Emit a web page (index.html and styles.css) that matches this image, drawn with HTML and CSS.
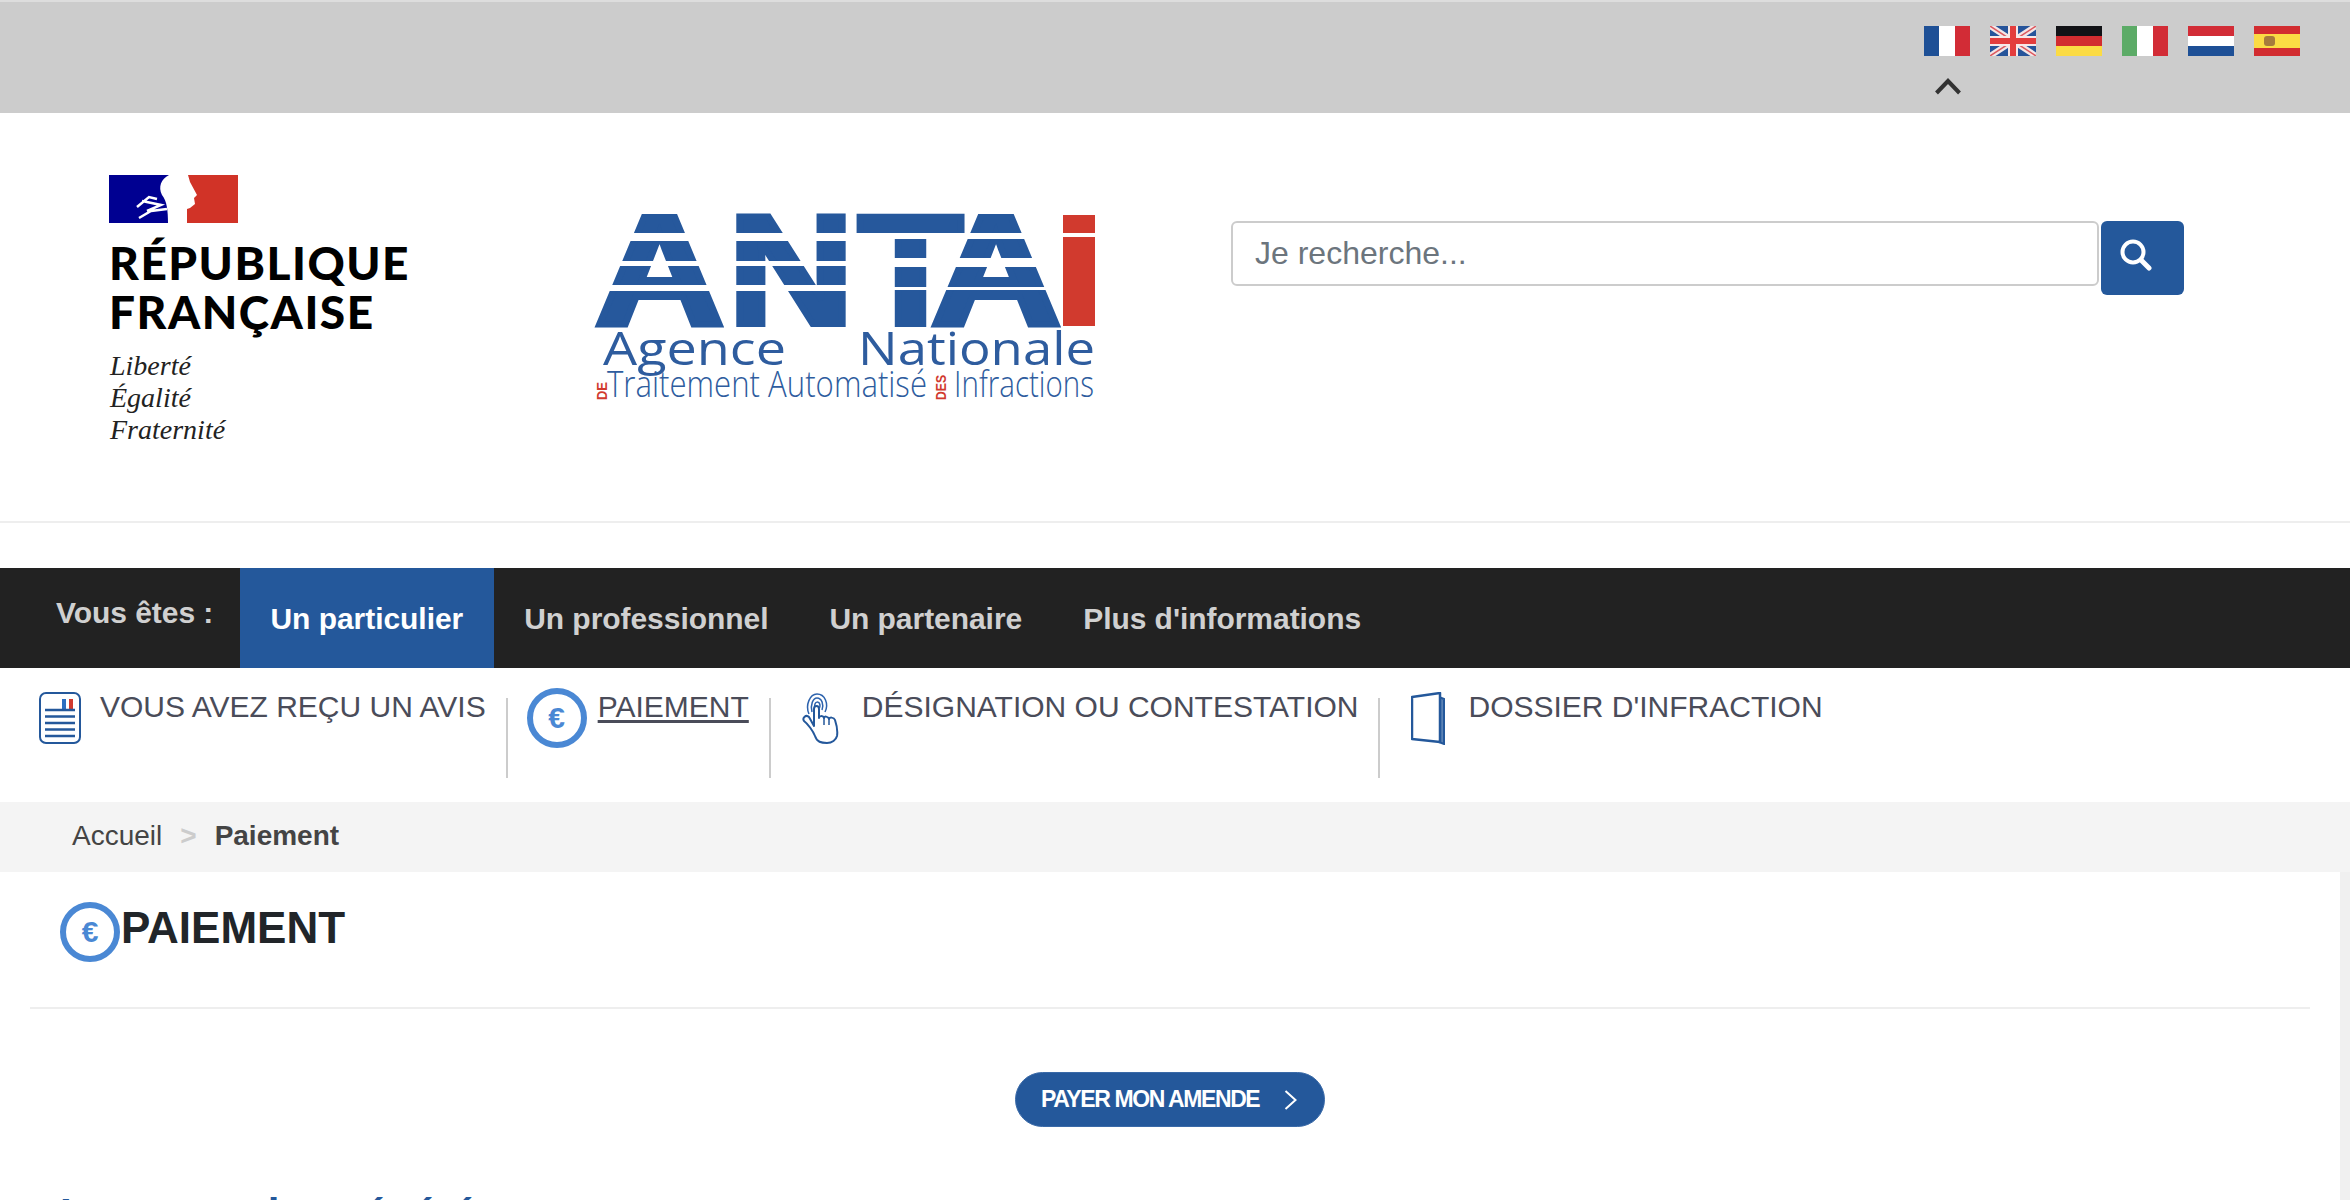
FILE: index.html
```html
<!DOCTYPE html>
<html lang="fr">
<head>
  <meta charset="UTF-8">
  <meta name="viewport" content="width=device-width, initial-scale=1.0">
  <title>ANTAI - Paiement</title>
  <link rel="stylesheet" href="styles.css">
</head>
<body>
  <!-- Langues -->
  <div class="topbar">
    <div class="lang">
      <div class="flags">
        <svg class="flag" viewBox="0 0 46 30"><rect width="46" height="30" fill="#fff"/><rect width="15" height="30" fill="#1e5096"/><rect x="31" width="15" height="30" fill="#d22c36"/></svg>
        <svg class="flag" viewBox="0 0 46 30"><rect width="46" height="30" fill="#26549a"/><path d="M0 0L46 30M46 0L0 30" stroke="#f3e6e6" stroke-width="6"/><path d="M0 0L46 30M46 0L0 30" stroke="#dc5a60" stroke-width="1.5"/><path d="M23 0V30M0 15H46" stroke="#f6e8e8" stroke-width="10"/><path d="M23 0V30M0 15H46" stroke="#e33d3d" stroke-width="6"/></svg>
        <svg class="flag" viewBox="0 0 46 30"><rect width="46" height="10" fill="#111216"/><rect y="10" width="46" height="10" fill="#d22c30"/><rect y="20" width="46" height="10" fill="#fbdb44"/></svg>
        <svg class="flag" viewBox="0 0 46 30"><rect width="46" height="30" fill="#fff"/><rect width="15" height="30" fill="#5cab67"/><rect x="31" width="15" height="30" fill="#d22c36"/></svg>
        <svg class="flag" viewBox="0 0 46 30"><rect width="46" height="10" fill="#d22c36"/><rect y="10" width="46" height="10" fill="#fff"/><rect y="20" width="46" height="10" fill="#1e5096"/></svg>
        <svg class="flag" viewBox="0 0 46 30"><rect width="46" height="30" fill="#d22c30"/><rect y="8" width="46" height="14" fill="#fbdb44"/><rect x="10" y="10" width="11" height="10" rx="3" fill="#a67b3c"/></svg>
      </div>
      <svg class="lang-toggle" viewBox="0 0 26 18"><path d="M1.5 16L13 4L24.500 16" fill="none" stroke="#333" stroke-width="4"/></svg>
    </div>
  </div>

  <header class="header">
    <div class="brand">
      <svg class="marianne" viewBox="0 0 129 48">
        <rect width="62" height="48" fill="#000091"/>
        <rect x="78" width="51" height="48" fill="#d13327"/>
        <path d="M60 0H79L81 7L88 20L85 23L86 29L81 33L72 36L71 42L73 48H59C59 36 58 26 53 20C49 12 52 4 60 0Z" fill="#fff"/>
        <path d="M28 32L40 22L48 24M33 26L52 30L38 36M30 43L42 36L58 34" fill="none" stroke="#fff" stroke-width="2.500"/>
      </svg>
      <div class="brand-name">RÉPUBLIQUE<br>FRANÇAISE</div>
      <div class="brand-motto">Liberté<br>Égalité<br>Fraternité</div>
    </div>

    <svg class="antai" viewBox="590 210 510 195" role="img" aria-label="ANTAI">
      <g class="antai-big">
        <text x="595" y="324" textLength="129" lengthAdjust="spacingAndGlyphs">A</text>
        <text x="728" y="324" textLength="126" lengthAdjust="spacingAndGlyphs">N</text>
        <text x="858" y="324" textLength="105" lengthAdjust="spacingAndGlyphs">T</text>
        <text x="931" y="324" textLength="130" lengthAdjust="spacingAndGlyphs">A</text>
      </g>
      <rect x="1063" y="215" width="32" height="18" fill="#d13a2e"/>
      <rect x="1063" y="237" width="32" height="89" fill="#d13a2e"/>
      <!-- bandes blanches du logo -->
      <rect x="590" y="233" width="268" height="8" fill="#fff"/>
      <rect x="590" y="261" width="268" height="5" fill="#fff"/>
      <rect x="590" y="285" width="268" height="6" fill="#fff"/>
      <rect x="857" y="233" width="205" height="6" fill="#fff"/>
      <rect x="857" y="258" width="205" height="9" fill="#fff"/>
      <rect x="857" y="287" width="205" height="3" fill="#fff"/>
      <text class="antai-mid" x="603" y="365" textLength="183" lengthAdjust="spacingAndGlyphs">Agence</text>
      <text class="antai-mid" x="858" y="365" textLength="237" lengthAdjust="spacingAndGlyphs">Nationale</text>
      <text class="antai-low" x="607" y="397" textLength="320" lengthAdjust="spacingAndGlyphs">Traitement Automatisé</text>
      <text class="antai-low" x="954" y="397" textLength="140" lengthAdjust="spacingAndGlyphs">Infractions</text>
      <text class="antai-de" transform="translate(607 400) rotate(-90)" textLength="18" lengthAdjust="spacingAndGlyphs">DE</text>
      <text class="antai-de" transform="translate(946 400) rotate(-90)" textLength="25" lengthAdjust="spacingAndGlyphs">DES</text>
    </svg>

    <form class="search">
      <input class="search-input" type="text" placeholder="Je recherche...">
      <button class="search-btn" type="button" aria-label="Rechercher">
        <svg viewBox="0 0 32 32" width="32" height="32"><circle cx="13" cy="13" r="10.500" fill="none" stroke="#fff" stroke-width="4"/><path d="M21 21L29 29" stroke="#fff" stroke-width="5" stroke-linecap="round"/></svg>
      </button>
    </form>
  </header>

  <nav class="nav">
    <span class="nav-label">Vous êtes :</span>
    <a class="nav-link active" href="#">Un particulier</a>
    <a class="nav-link" href="#">Un professionnel</a>
    <a class="nav-link" href="#">Un partenaire</a>
    <a class="nav-link" href="#">Plus d'informations</a>
  </nav>

  <div class="subnav">
    <svg class="sub-icon icon-doc" viewBox="0 0 42 52">
      <rect x="1" y="1" width="40" height="50" rx="6" fill="#fff" stroke="#24589b" stroke-width="2"/>
      <rect x="23" y="7" width="4" height="11" fill="#2c6fc0"/><rect x="27" y="7" width="3" height="11" fill="#fff"/><rect x="30" y="7" width="4" height="11" fill="#d13a2e"/>
      <path d="M6 18H36M6 24.500H36M6 31H36M6 37.500H36M6 44H36" stroke="#24589b" stroke-width="2.500"/>
    </svg>
    <a class="sub-link" href="#">VOUS AVEZ REÇU UN AVIS</a>
    <span class="sub-sep"></span>
    <span class="euro euro-sub">€</span>
    <a class="sub-link current" href="#">PAIEMENT</a>
    <span class="sub-sep"></span>
    <svg class="sub-icon icon-hand" viewBox="0 0 37 52">
      <path d="M7 22C3 13 8 2 15 2C23 2 27 12 23 20M10 20C8 13 11 6 15 6C20 6 22 13 20 18M13 17C12 13 13 10 15.500 10C18 10 18.500 14 17.500 16" fill="none" stroke="#2c62ad" stroke-width="1.500"/>
      <path d="M12 34V17C12 13 17 13 17 17V26C17 24 21 23 22 26C22 24 26 24 27 27C27 25 32 25 33 28C35 34 36 38 35 44C34 48 30 51 25 51C19 51 15 50 13 44C11 39 6 32 2 29C0 26 4 22 7 25Z" fill="#fff" stroke="#24589b" stroke-width="2" stroke-linejoin="round"/>
      <path d="M22 26V33M27 27V33" stroke="#24589b" stroke-width="1.500"/>
    </svg>
    <a class="sub-link" href="#">DÉSIGNATION OU CONTESTATION</a>
    <span class="sub-sep"></span>
    <svg class="sub-icon icon-book" viewBox="0 0 35 53">
      <path d="M28 5L33 7V52L28 50" fill="none" stroke="#24589b" stroke-width="2"/>
      <path d="M31 6V51" stroke="#24589b" stroke-width="1.500"/>
      <path d="M1 5L29 1V50L1 47Z" fill="#fff" stroke="#24589b" stroke-width="2.500" stroke-linejoin="round"/>
    </svg>
    <a class="sub-link" href="#">DOSSIER D'INFRACTION</a>
  </div>

  <div class="breadcrumb">
    <a href="#">Accueil</a>
    <span class="crumb-sep">&gt;</span>
    <strong>Paiement</strong>
  </div>

  <div class="page">
    <main class="content">
      <div class="title-row">
        <span class="euro euro-title">€</span>
        <h1>PAIEMENT</h1>
      </div>
      <div class="pay-row">
        <a class="pay-btn" href="#">PAYER MON AMENDE
          <svg viewBox="0 0 13 20" width="13" height="20"><path d="M1.500 1L11.500 10L1.500 19" fill="none" stroke="#fff" stroke-width="2"/></svg>
        </a>
      </div>
      <h2>Les amendes générées</h2>
    </main>
    <div class="side"></div>
  </div>
</body>
</html>
```

FILE: styles.css
```css
html, body {
  height: 1200px;
  overflow: hidden;
}
body {
  margin: 0;
  font-family: "Liberation Sans", Arial, sans-serif;
  background-color: #fff;
}
a {
  text-decoration: none;
  color: inherit;
}

.topbar {
  height: 111px;
  background-color: #ccc;
  border-top: 2px solid #ddd;
  display: flex;
  justify-content: flex-end;
  padding-right: 50px;
}
.lang {
  padding-top: 24px;
}
.flags {
  display: flex;
  gap: 20px;
}
.flag {
  width: 46px;
  height: 30px;
  display: block;
}
.lang-toggle {
  display: block;
  width: 26px;
  height: 18px;
  margin: 21px 0 0 11px;
}

.header {
  height: 408px;
  border-bottom: 2px solid #eee;
  display: flex;
  align-items: flex-start;
}
.brand {
  width: 590px;
  flex: none;
  box-sizing: border-box;
  margin-top: 62px;
  padding-left: 109px;
}
.marianne {
  display: block;
  width: 129px;
  height: 48px;
}
.brand-name {
  margin-top: 15px;
  font-family: Lato, sans-serif;
  font-weight: 900;
  font-size: 46px;
  line-height: 49px;
  letter-spacing: 1.500px;
  color: #000;
}
.brand-motto {
  margin-top: 14px;
  padding-left: 1px;
  font-family: "Liberation Serif", serif;
  font-style: italic;
  font-size: 28px;
  line-height: 32px;
  color: #222;
}
.antai {
  flex: none;
  width: 510px;
  height: 195px;
  margin: 97px 131px 0 0;
  overflow: visible;
}
.antai-big text {
  font-family: "Liberation Sans", sans-serif;
  font-weight: 700;
  font-size: 155px;
  fill: #26589c;
  stroke: #26589c;
  stroke-width: 6px;
}
.antai-mid {
  font-family: "Open Sans", sans-serif;
  font-size: 45px;
  fill: #2e5c9e;
}
.antai-low {
  font-family: "Open Sans", sans-serif;
  font-weight: 300;
  font-size: 37px;
  fill: #2e5c9e;
}
.antai-de {
  font-family: "Liberation Sans", sans-serif;
  font-weight: 700;
  font-size: 14px;
  fill: #d13a2e;
}
.search {
  display: flex;
  align-items: flex-start;
  gap: 2px;
  margin-top: 108px;
}
.search-input {
  width: 868px;
  height: 65px;
  box-sizing: border-box;
  border: 2px solid #ccc;
  border-radius: 6px;
  padding: 0 22px;
  font-family: "Liberation Sans", sans-serif;
  font-size: 32px;
  color: #333;
  outline: none;
}
.search-input::placeholder {
  color: #6c757d;
  opacity: 1;
}
.search-btn {
  width: 83px;
  height: 74px;
  background-color: #24589b;
  border: none;
  border-radius: 6px;
  display: flex;
  align-items: center;
  justify-content: center;
  padding: 0 14px 6px 0;
}

.nav {
  margin-top: 45px;
  height: 100px;
  background-color: #222;
  display: flex;
  font-weight: 700;
  font-size: 30px;
  letter-spacing: -0.050px;
  color: #d0d0d0;
}
.nav-label {
  width: 184px;
  padding: 28px 0 0 56px;
  line-height: 34px;
}
.nav-link {
  padding: 34px 30.500px 0;
  line-height: 34px;
}
.nav-link.active {
  background-color: #24589b;
  color: #fff;
}

.subnav {
  height: 114px;
  padding: 20px 0 0 39px;
  display: flex;
  align-items: flex-start;
  color: #4a4c59;
  font-size: 30px;
}
.sub-icon {
  display: block;
  margin-top: 4px;
  flex: none;
  height: 52px;
}
.icon-doc {
  width: 42px;
  margin-right: 19px;
}
.icon-hand {
  width: 37px;
  margin-right: 23px;
}
.icon-book {
  width: 35px;
  height: 53px;
  margin-right: 22px;
}
.sub-link {
  line-height: 34px;
  margin-top: 2px;
  white-space: nowrap;
}
.sub-link.current {
  text-decoration: underline;
  text-underline-offset: 3px;
}
.sub-sep {
  width: 2px;
  height: 80px;
  margin: 10px 19px 0 20px;
  background-color: #ccc;
  flex: none;
}
.sub-sep + .sub-icon {
  margin-left: 12px;
}
.euro {
  flex: none;
  box-sizing: border-box;
  width: 60px;
  height: 60px;
  border: 6px solid #4a88d4;
  border-radius: 50%;
  display: flex;
  align-items: center;
  justify-content: center;
  font-weight: 700;
  font-size: 30px;
  color: #4a88d4;
  background-color: #fff;
}
.euro-sub {
  margin-right: 11px;
}

.breadcrumb {
  height: 68px;
  padding-bottom: 2px;
  background-color: #f4f4f4;
  padding-left: 72px;
  display: flex;
  align-items: center;
  font-size: 28px;
  color: #444;
}
.crumb-sep {
  margin: 0 18px;
  color: #ccc;
  font-weight: 700;
}

.page {
  display: flex;
}
.content {
  flex: 1;
  padding: 0 30px;
}
.side {
  width: 10px;
  height: 328px;
  background-color: #f0f0f0;
}
.title-row {
  height: 105px;
  padding: 30px 0 0 30px;
  border-bottom: 2px solid #eee;
  display: flex;
  align-items: flex-start;
  gap: 1px;
}
h1 {
  margin: 2px 0 0;
  font-size: 44px;
  line-height: 48px;
  color: #212529;
}
.pay-row {
  margin-top: 63px;
  display: flex;
  justify-content: center;
}
.pay-btn {
  width: 310px;
  height: 55px;
  box-sizing: border-box;
  background-color: #24589b;
  border: 1px solid #3a6aa8;
  border-radius: 28px;
  color: #fff;
  font-weight: 700;
  font-size: 23px;
  letter-spacing: -1.400px;
  display: flex;
  align-items: center;
  justify-content: space-between;
  padding: 0 27px 0 25px;
  white-space: nowrap;
}
h2 {
  margin: 63px 0 0 30px;
  font-size: 42px;
  line-height: 48px;
  color: #24589b;
}
```
